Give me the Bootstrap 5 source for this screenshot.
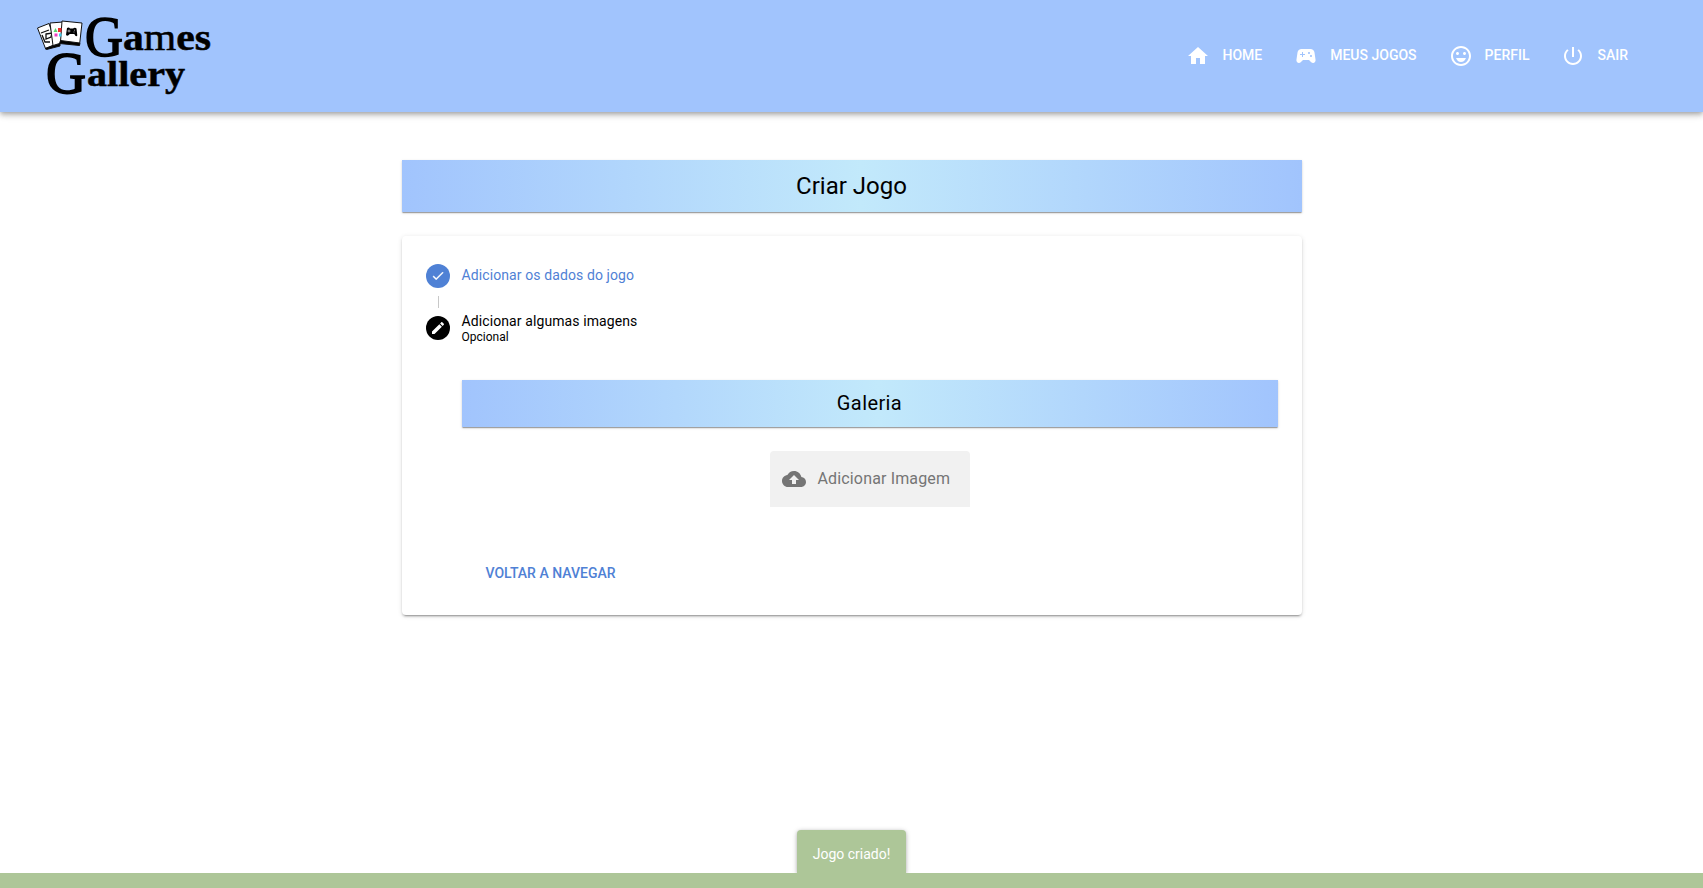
<!DOCTYPE html>
<html lang="pt-BR">
<head>
<meta charset="utf-8">
<meta name="viewport" content="width=device-width, initial-scale=1">
<title>Games Gallery</title>
<link href="https://cdn.jsdelivr.net/npm/bootstrap@5.3.0/dist/css/bootstrap.min.css" rel="stylesheet">
<style>
  body { font-family: Roboto, "Liberation Sans", sans-serif; font-size: 14px; line-height: 20px; color: #000; background: #fff; height: 100vh; overflow: hidden; }
  svg { display: block; flex: none; }
  .topbar { height: 112px; background: #a1c4fd; padding: 0 75px 0 32px;
    box-shadow: 0 2px 4px -1px rgba(0,0,0,.2), 0 4px 5px rgba(0,0,0,.14), 0 1px 10px rgba(0,0,0,.12); z-index: 2; }
  .topbar .nav-link { font-weight: 500; color: #fff; padding: 0; gap: 12px; line-height: 24px; }
  .topbar .nav-link span { margin-top: -2px; }
  .menu { gap: 32px; }
  .page { width: 900px; margin-top: 48px; }
  .sheet { box-shadow: 0 2px 1px -1px rgba(0,0,0,.2), 0 1px 1px rgba(0,0,0,.14), 0 1px 3px rgba(0,0,0,.12); }
  .banner { background: linear-gradient(to right, #a1c4fd 0%, #c2e9fb 51%, #a1c4fd 100%); font-weight: 400; margin: 0; }
  .banner-lg { height: 52px; font-size: 24px; line-height: 52px; }
  .banner-md { height: 47px; font-size: 20px; line-height: 47px; letter-spacing: .4px; }
  .panel { margin-top: 24px; height: 379px; border-radius: 4px; padding: 24px; background: #fff;
    box-shadow: 0 3px 1px -2px rgba(0,0,0,.2), 0 2px 2px rgba(0,0,0,.14), 0 1px 5px rgba(0,0,0,.12); }
  .step { gap: 12px; letter-spacing: .1px; }
  .step-done { height: 32px; color: #4f81d5; padding-top: 4px; }
  .done-label { line-height: 22px; }
  .step-line { width: 1px; height: 12px; margin: 4px 0 4px 12px; background: #c8c8c8; }
  .step-now { height: 32px; }
  .step-now small { font-size: 12px; line-height: 14px; letter-spacing: 0; }
  .step-now .title { line-height: 17px; }
  .step-body { padding-left: 36px; margin-top: 36px; }
  .upload { width: 200px; height: 56px; margin-top: 24px; padding: 0 12px; gap: 12px; background: #f1f1f1; border-radius: 4px 4px 0 0; color: #757575; font-size: 16px; letter-spacing: .15px; }
  .back { font-size: 14px; font-weight: 500; color: #4f81d5; padding: 0; margin: 54px 0 0 24px; line-height: 24px; border: 0; }
  .toast-area { height: 58px; }
  .snack { background: #adc698; color: #fff; width: 109px; height: 43px; border-radius: 4px 4px 0 0; padding-top: 14px;
    box-shadow: 0 1px 5px rgba(0,0,0,.25), 0 1px 3px rgba(0,0,0,.12); }
  .strip { height: 15px; background: #adc698; }
</style>
</head>
<body class="d-flex flex-column">
<header class="topbar d-flex align-items-center justify-content-between flex-shrink-0 position-relative">
  <a href="#" aria-label="Games Gallery">
    <svg width="186" height="112" viewBox="32 0 186 112" font-family="'Liberation Serif', serif" font-weight="700">
      <g stroke="#111" stroke-width="1">
        <path d="M37.500 28L49 23.500L56 44L45.500 48.500Z" fill="#fff"/>
        <path d="M45 48.500L60 43.500V46L46.500 49.500Z" fill="#000"/>
        <path d="M41 33l8-3M42 35l3 7h5M46 34l6-1-1 4-5 2z" fill="none" stroke-width="1.300"/>
        <path d="M50 23L63 22L61 43L53 45.500Z" fill="#fff"/>
        <path d="M62 21L82 23L79.500 45L60.500 42Z" fill="#fff"/>
        <path d="M60.500 40.500L79.800 43L79.500 45.500L59.500 43.500Z" fill="#000"/>
      </g>
      <path d="M53.500 32l2-4 2 4z" fill="#58d66b"/><path d="M58 28h3.500v4H58z" fill="#e93131"/><path d="M54.500 33.500h3v3h-3z" fill="#ef3ec1"/><path d="M59 33.500h2.500v3H59z" fill="#42c9e9"/>
      <path d="M67 28q2-1 3 .5h3q2-1.500 3.500 0l.8 7q-1.300 2-3-1.500h-4.500q-2.500 3-3.800.8z" fill="#000"/>
      <path d="M69 29.500v3M67.500 31h3M74 30.200h1M73.500 32h1" stroke="#fff" stroke-width=".6"/>
      <g fill="#000" stroke="#000" stroke-width=".5">
        <text x="85" y="55.500" font-size="57" font-weight="400" stroke-width="1.600" textLength="38" lengthAdjust="spacingAndGlyphs">G</text>
        <text x="123" y="49.500" font-size="37" textLength="88" lengthAdjust="spacingAndGlyphs">a<tspan font-weight="400">m</tspan>es</text>
        <text x="46" y="93" font-size="60" font-weight="400" stroke-width="1.800" textLength="40" lengthAdjust="spacingAndGlyphs">G</text>
        <text x="87" y="85.500" font-size="36" textLength="98" lengthAdjust="spacingAndGlyphs">allery</text>
      </g>
    </svg>
  </a>
  <nav class="menu d-flex">
    <a class="nav-link d-flex align-items-center" href="#"><svg width="24" height="24" viewBox="0 0 24 24" fill="currentColor"><path d="M10 20v-6h4v6h5v-8h3L12 3 2 12h3v8z"/></svg><span>HOME</span></a>
    <a class="nav-link d-flex align-items-center" href="#"><svg width="24" height="24" viewBox="0 0 24 24" fill="currentColor"><path d="M21.580 16.090l-1.090-7.660C20.210 6.460 18.520 5 16.530 5H7.470C5.480 5 3.790 6.460 3.510 8.430l-1.090 7.660C2.200 17.630 3.390 19 4.940 19c.68 0 1.320-.27 1.800-.75L9 16h6l2.250 2.250c.48.48 1.130.75 1.800.75 1.560 0 2.750-1.370 2.530-2.910zM11 11H9v2H8v-2H6v-1h2V8h1v2h2v1zm4-1c-.55 0-1-.45-1-1s.45-1 1-1 1 .45 1 1-.45 1-1 1zm2 3c-.55 0-1-.45-1-1s.45-1 1-1 1 .45 1 1-.45 1-1 1z"/></svg><span>MEUS JOGOS</span></a>
    <a class="nav-link d-flex align-items-center" href="#"><svg width="24" height="24" viewBox="0 0 24 24" fill="currentColor"><path d="M11.990 2C6.470 2 2 6.480 2 12s4.470 10 9.990 10C17.520 22 22 17.520 22 12S17.520 2 11.990 2zM12 20c-4.420 0-8-3.580-8-8s3.580-8 8-8 8 3.580 8 8-3.580 8-8 8zM15.500 11c.83 0 1.500-.67 1.500-1.500S16.330 8 15.500 8 14 8.670 14 9.500s.67 1.500 1.500 1.500zm-7 0c.83 0 1.500-.67 1.500-1.500S9.330 8 8.500 8 7 8.670 7 9.500 7.670 11 8.500 11zM12 18c2.280 0 4.220-1.660 5-4H7c.78 2.340 2.720 4 5 4z"/></svg><span>PERFIL</span></a>
    <a class="nav-link d-flex align-items-center" href="#"><svg width="24" height="24" viewBox="0 0 24 24" fill="currentColor"><path d="M13 3h-2v10h2V3zm4.830 2.170l-1.420 1.420C17.990 7.860 19 9.810 19 12c0 3.870-3.130 7-7 7s-7-3.130-7-7c0-2.190 1.010-4.140 2.580-5.420L6.170 5.170C4.230 6.820 3 9.260 3 12c0 4.970 4.030 9 9 9s9-4.030 9-9c0-2.740-1.230-5.180-3.170-6.830z"/></svg><span>SAIR</span></a>
  </nav>
</header>

<main class="page mx-auto flex-grow-1">
  <h1 class="banner banner-lg sheet text-center">Criar Jogo</h1>
  <section class="panel">
    <div class="step step-done d-flex">
      <svg width="24" height="24" viewBox="0 0 24 24"><circle cx="12" cy="12" r="12" fill="#4f81d5"/><path transform="translate(4.800 4.600) scale(.6)" d="M9 16.200L4.800 12l-1.400 1.400L9 19 21 7l-1.400-1.400L9 16.200z" fill="#fff" stroke="#fff" stroke-width=".5"/></svg>
      <span class="done-label">Adicionar os dados do jogo</span>
    </div>
    <div class="step-line"></div>
    <div class="step step-now d-flex align-items-center">
      <svg width="24" height="24" viewBox="0 0 24 24"><circle cx="12" cy="12" r="12"/><path transform="translate(4 4) scale(.667)" d="M3 17.250V21h3.750L17.810 9.940l-3.750-3.750L3 17.250zM20.710 7.040c.39-.39.39-1.020 0-1.410l-2.340-2.340c-.39-.39-1.020-.39-1.410 0l-1.830 1.830 3.750 3.750 1.830-1.830z" fill="#fff"/></svg>
      <div class="d-flex flex-column"><span class="title">Adicionar algumas imagens</span><small>Opcional</small></div>
    </div>
    <div class="step-body">
      <h2 class="banner banner-md sheet text-center">Galeria</h2>
      <div class="upload d-flex align-items-center mx-auto">
        <svg width="24" height="24" viewBox="0 0 24 24" fill="#757575"><path d="M19.350 10.040C18.670 6.590 15.640 4 12 4 9.110 4 6.600 5.640 5.350 8.040 2.340 8.360 0 10.910 0 14c0 3.310 2.690 6 6 6h13c2.760 0 5-2.240 5-5 0-2.640-2.050-4.780-4.650-4.960zM14 13v4h-4v-4H7l5-5 5 5h-3z"/></svg>
        <span>Adicionar Imagem</span>
      </div>
      <button class="btn back" type="button">VOLTAR A NAVEGAR</button>
    </div>
  </section>
</main>

<footer class="toast-area flex-shrink-0 d-flex flex-column align-items-center">
  <div class="snack text-center" role="status">Jogo criado!</div>
  <div class="strip w-100 position-relative"></div>
</footer>
<script src="https://cdn.jsdelivr.net/npm/bootstrap@5.3.0/dist/js/bootstrap.bundle.min.js"></script>
</body>
</html>
